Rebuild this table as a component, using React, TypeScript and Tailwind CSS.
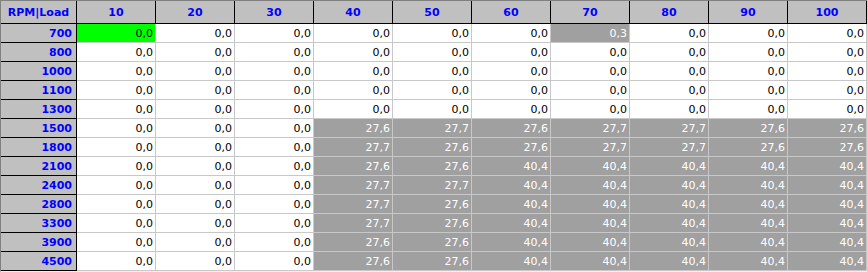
const loads = [10, 20, 30, 40, 50, 60, 70, 80, 90, 100]
const rpms = [700, 800, 1000, 1100, 1300, 1500, 1800, 2100, 2400, 2800, 3300, 3900, 4500]

// values only for the grey block (rows 1500..4500, loads 40..100)
const block: string[][] = [
    ["27,6", "27,7", "27,6", "27,7", "27,7", "27,6", "27,6"],
    ["27,7", "27,6", "27,6", "27,7", "27,7", "27,6", "27,6"],
    ["27,6", "27,6", "40,4", "40,4", "40,4", "40,4", "40,4"],
    ["27,7", "27,7", "40,4", "40,4", "40,4", "40,4", "40,4"],
    ["27,7", "27,6", "40,4", "40,4", "40,4", "40,4", "40,4"],
    ["27,7", "27,6", "40,4", "40,4", "40,4", "40,4", "40,4"],
    ["27,6", "27,6", "40,4", "40,4", "40,4", "40,4", "40,4"],
    ["27,6", "27,6", "40,4", "40,4", "40,4", "40,4", "40,4"],
]

type Kind = "plain" | "green" | "grey"

function cellInfo(r: number, c: number): { text: string; kind: Kind } {
    if (r === 0 && c === 0) return { text: "0,0", kind: "green" }
    if (r === 0 && c === 6) return { text: "0,3", kind: "grey" }
    if (r >= 5 && c >= 3) return { text: block[r - 5][c - 3], kind: "grey" }
    return { text: "0,0", kind: "plain" }
}

const kindClass: Record<Kind, string> = {
    plain: "bg-white text-black border-[#c8c8c8]",
    green: "bg-[#00ff00] text-black border-[#c8c8c8]",
    grey: "bg-[#a0a0a0] text-white border-[#c8c8c8]",
}

export default function App() {
    return (
        <div
            className="w-[867px] h-[272px] bg-white border-t border-l border-b border-t-[#808080] border-l-[#808080] border-b-[#f0f0f0] text-[11px] leading-[13px]"
            style={{ fontFamily: "'DejaVu Sans', Verdana, sans-serif" }}
        >
            <div className="grid grid-cols-[76px_repeat(10,79px)] grid-rows-[23px_repeat(13,19px)]">
                <div className="bg-[#c0c0c0] border-r border-b border-black text-[#0000ff] font-bold flex items-center justify-center">
                    RPM|Load
                </div>
                {loads.map((l) => (
                    <div
                        key={l}
                        className="bg-[#c0c0c0] border-r border-b border-black text-[#0000ff] font-bold flex items-center justify-center"
                    >
                        {l}
                    </div>
                ))}
                {rpms.map((rpm, r) => (
                    <>
                        <div
                            key={"h" + rpm}
                            className="bg-[#c0c0c0] border-r border-b border-black text-[#0000ff] font-bold flex items-center justify-end pr-[4px]"
                        >
                            {rpm}
                        </div>
                        {loads.map((l, c) => {
                            const info = cellInfo(r, c)
                            return (
                                <div
                                    key={rpm + "-" + l}
                                    className={"border-r border-b flex items-center justify-end pr-[2px] " + kindClass[info.kind]}
                                >
                                    {info.text}
                                </div>
                            )
                        })}
                    </>
                ))}
            </div>
        </div>
    )
}
